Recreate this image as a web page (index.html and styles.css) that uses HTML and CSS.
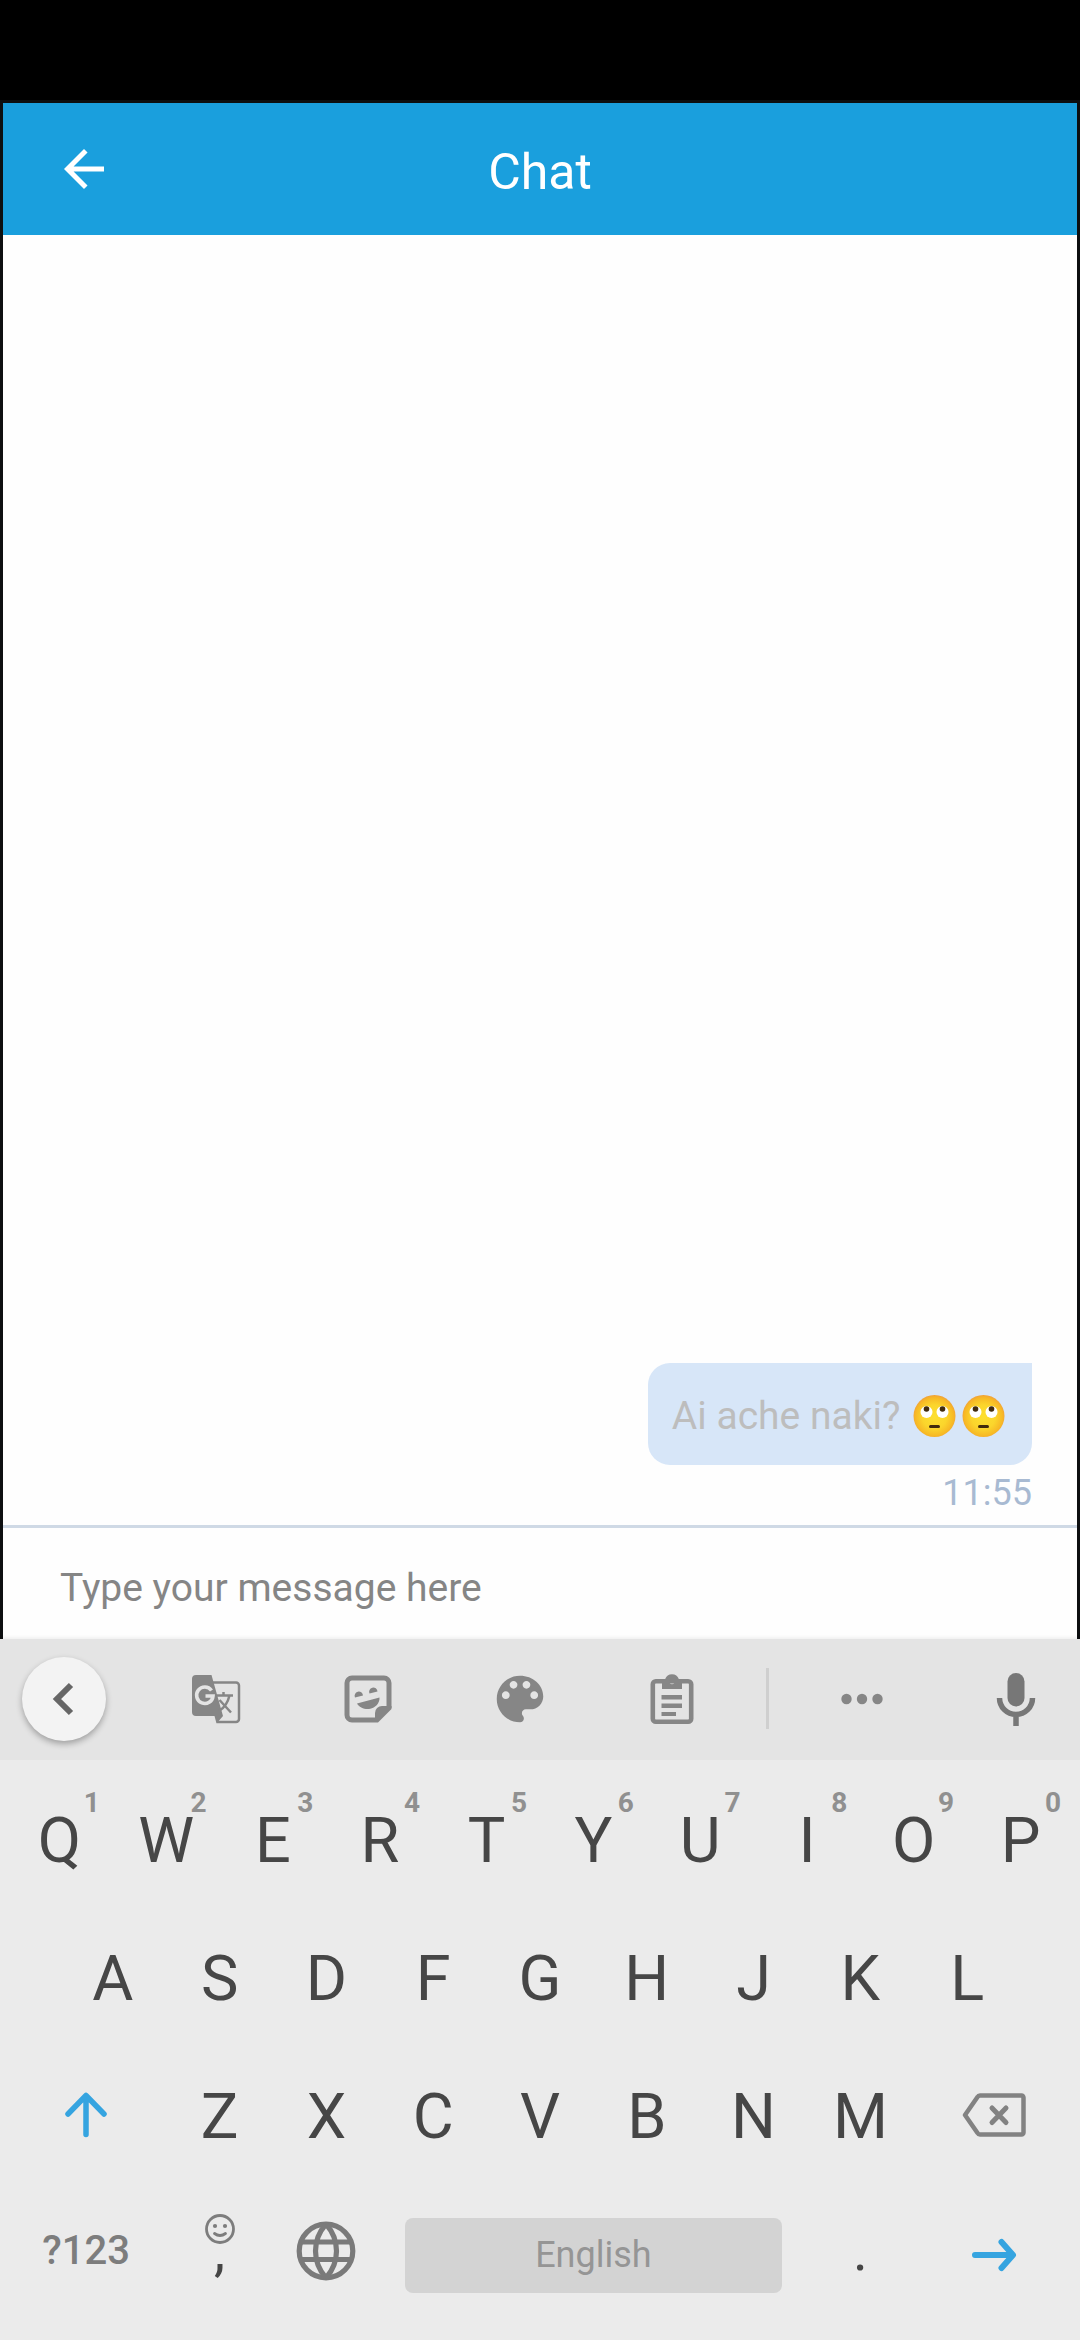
FILE: index.html
```html
<!DOCTYPE html>
<html lang="en">
<head>
<meta charset="utf-8">
<meta name="viewport" content="width=device-width, initial-scale=1">
<title>Chat</title>
<link rel="stylesheet" href="styles.css">
</head>
<body>
<svg class="defs" aria-hidden="true">
  <defs>
    <radialGradient id="skin" cx="50%" cy="52%" r="52%">
      <stop offset="0" stop-color="#fde030"/>
      <stop offset="0.55" stop-color="#fbd52c"/>
      <stop offset="0.88" stop-color="#f7b825"/>
      <stop offset="1" stop-color="#f0a13a"/>
    </radialGradient>
    <symbol id="eyeroll" viewBox="0 0 48 42">
      <circle cx="24" cy="21" r="21" fill="url(#skin)"/>
      <circle cx="16" cy="17" r="6" fill="#fff"/>
      <circle cx="32" cy="17" r="6" fill="#fff"/>
      <circle cx="16" cy="14" r="2.8" fill="#422b0d"/>
      <circle cx="32" cy="14" r="2.8" fill="#422b0d"/>
      <rect x="18.5" y="30" width="11" height="3" rx="1.5" fill="#422b0d"/>
    </symbol>
  </defs>
</svg>

<div class="status-bar"></div>

<main class="app">
  <header class="app-bar">
    <button class="back" type="button" aria-label="Back">
      <svg width="60" height="60" viewBox="0 0 24 24" fill="currentColor"><path d="M20 11H7.83l5.59-5.59L12 4l-8 8 8 8 1.41-1.41L7.83 13H20v-2z"/></svg>
    </button>
    <h1 class="title">Chat</h1>
  </header>

  <section class="messages">
    <article class="message">
      <p class="bubble">Ai ache naki? <svg class="emoji" role="img" aria-label="Eye roll"><use href="#eyeroll"/></svg><svg class="emoji" role="img" aria-label="Eye roll"><use href="#eyeroll"/></svg></p>
      <time class="time">11:55</time>
    </article>
  </section>

  <form class="composer">
    <input class="composer-input" type="text" aria-label="Message" placeholder="Type your message here">
  </form>
</main>

<section class="keyboard" aria-label="Keyboard">
  <div class="toolbar">
    <div class="toolbar-end">
      <button class="tool tool-round" type="button" aria-label="Collapse">
        <svg width="84" height="84" viewBox="0 0 84 84" fill="none" stroke="#666" stroke-width="6"><path d="M49 28L35 42l14 14"/></svg>
      </button>
    </div>
    <div class="tools">
      <button class="tool" type="button" aria-label="Translate">
        <svg width="50" height="50" viewBox="0 0 50 50"><path d="M22 8.500H45a3 3 0 0 1 3 3V45a3 3 0 0 1-3 3H26" fill="none" stroke="#868686" stroke-width="2.500"/><path d="M5 1H20.500L32 42l-6.500 7.500L23.500 42H5a4 4 0 0 1-4-4V5a4 4 0 0 1 4-4z" fill="#868686"/><path d="M20.500 16.500A8.200 8.200 0 1 0 22 22H14.500" fill="none" stroke="#e4e4e4" stroke-width="3.600"/><path d="M25.500 21.500H42M32.500 18v3.500M38.500 21.500C37 28 33 34 28 37M28.500 26L40 38.500" fill="none" stroke="#868686" stroke-width="2.500"/></svg>
      </button>
      <button class="tool" type="button" aria-label="Stickers">
        <svg width="48" height="48" viewBox="0 0 48 48" fill="#868686"><path d="M31 45H8a5 5 0 0 1-5-5V8a5 5 0 0 1 5-5h32a5 5 0 0 1 5 5v25" fill="none" stroke="#868686" stroke-width="5"/><path d="M31 47.500V38a7 7 0 0 1 7-7h9.500v3L34 47.500z"/><path d="M11 22.500a4.200 4.200 0 1 1 8-2zM25.500 18.500a4.200 4.200 0 1 1 8-2zM13 28.500L35.500 22.500C36 28 31 33.500 25 34 20 34.500 15 32 13 28.500z"/></svg>
      </button>
      <button class="tool" type="button" aria-label="Themes">
        <svg width="62" height="62" viewBox="0 0 24 24" fill="#868686"><path d="M12 3c-4.970 0-9 4.030-9 9s4.030 9 9 9c.830 0 1.500-.670 1.500-1.500 0-.390-.150-.740-.390-1.010-.230-.260-.380-.610-.380-.990 0-.830.670-1.500 1.500-1.500H16c2.760 0 5-2.240 5-5 0-4.420-4.030-8-9-8zm-5.500 9c-.830 0-1.500-.670-1.500-1.500S5.670 9 6.500 9 8 9.670 8 10.500 7.330 12 6.500 12zm3-4C8.670 8 8 7.330 8 6.500S8.670 5 9.500 5s1.500.670 1.500 1.500S10.330 8 9.500 8zm5 0c-.830 0-1.500-.670-1.500-1.500S13.670 5 14.500 5s1.500.670 1.500 1.500S15.330 8 14.500 8zm3 4c-.830 0-1.500-.670-1.500-1.500S16.670 9 17.500 9s1.500.670 1.500 1.500-.670 1.500-1.500 1.500z"/></svg>
      </button>
      <button class="tool" type="button" aria-label="Clipboard">
        <svg width="44" height="52" viewBox="0 0 44 52" fill="#868686"><rect x="2.800" y="8.200" width="38.400" height="40.600" rx="3" fill="none" stroke="#868686" stroke-width="4.600"/><path fill-rule="evenodd" d="M12 6h3.200a7.200 7.200 0 0 1 13.600 0H32v10H12zM22 6a2.600 2.600 0 1 0 0 5.200A2.600 2.600 0 0 0 22 6z"/><path d="M11.500 22H32v4.500H11.500zM11.500 30.500H32V35H11.500zM11.500 39H26v4H11.500z"/></svg>
      </button>
      <span class="divider"></span>
      <button class="tool" type="button" aria-label="More">
        <svg width="42" height="12" viewBox="0 0 42 12" fill="#868686"><circle cx="5.500" cy="6" r="5.200"/><circle cx="21" cy="6" r="5.200"/><circle cx="36.500" cy="6" r="5.200"/></svg>
      </button>
    </div>
    <div class="toolbar-end">
      <button class="tool" type="button" aria-label="Voice input">
        <svg width="40" height="54" viewBox="0 0 40 54"><rect x="11.500" y="1" width="17" height="33.500" rx="8.500" fill="#777"/><path d="M3.500 26a16.500 16.500 0 0 0 33 0M20 42v12" fill="none" stroke="#777" stroke-width="5.500"/></svg>
      </button>
    </div>
  </div>

  <div class="keys">
    <div class="row">
      <button class="key" type="button">Q<span class="hint">1</span></button>
      <button class="key" type="button">W<span class="hint">2</span></button>
      <button class="key" type="button">E<span class="hint">3</span></button>
      <button class="key" type="button">R<span class="hint">4</span></button>
      <button class="key" type="button">T<span class="hint">5</span></button>
      <button class="key" type="button">Y<span class="hint">6</span></button>
      <button class="key" type="button">U<span class="hint">7</span></button>
      <button class="key" type="button">I<span class="hint">8</span></button>
      <button class="key" type="button">O<span class="hint">9</span></button>
      <button class="key" type="button">P<span class="hint">0</span></button>
    </div>
    <div class="row row-home">
      <button class="key" type="button">A</button>
      <button class="key" type="button">S</button>
      <button class="key" type="button">D</button>
      <button class="key" type="button">F</button>
      <button class="key" type="button">G</button>
      <button class="key" type="button">H</button>
      <button class="key" type="button">J</button>
      <button class="key" type="button">K</button>
      <button class="key" type="button">L</button>
    </div>
    <div class="row">
      <button class="key key-wide key-icon" type="button" aria-label="Shift">
        <svg width="44" height="46" viewBox="0 0 44 46" fill="none" stroke="#35a4e0" stroke-width="5.500" stroke-linecap="round" stroke-linejoin="round"><path d="M22 42.500V4M4 22L22 3.500 40 22"/></svg>
      </button>
      <button class="key" type="button">Z</button>
      <button class="key" type="button">X</button>
      <button class="key" type="button">C</button>
      <button class="key" type="button">V</button>
      <button class="key" type="button">B</button>
      <button class="key" type="button">N</button>
      <button class="key" type="button">M</button>
      <button class="key key-wide key-icon" type="button" aria-label="Delete">
        <svg width="64" height="46" viewBox="0 0 64 46" fill="none" stroke="#828282" stroke-width="4.500" stroke-linecap="round" stroke-linejoin="round"><path d="M18 3.500H59.500a2 2 0 0 1 2 2V40.500a2 2 0 0 1-2 2H18a3 3 0 0 1-2.500-1.500L3 23 15.500 5a3 3 0 0 1 2.500-1.500z"/><path d="M30 16L44 30.500M44 16L30 30.500" stroke-width="5"/></svg>
      </button>
    </div>
    <div class="row">
      <button class="key key-wide key-raised key-symbols" type="button">?123</button>
      <button class="key key-comma" type="button">
        <svg width="30" height="30" viewBox="0 0 30 30" fill="none" stroke="#7d7d7d" stroke-width="2.800"><circle cx="15" cy="15" r="13.500"/><path d="M9.500 19.500q5.500 4 11 0" stroke-linecap="round"/><circle cx="10" cy="12" r="2.100" fill="#7d7d7d" stroke="none"/><circle cx="20" cy="12" r="2.100" fill="#7d7d7d" stroke="none"/></svg>
        <span class="comma">,</span>
      </button>
      <button class="key key-raised" type="button" aria-label="Change language">
        <svg width="60" height="60" viewBox="0 0 60 60" fill="none" stroke="#7a7a7a" stroke-width="5.200"><circle cx="30" cy="30" r="26.800"/><path d="M5 21H55M5 38.500H55M30 3C16 19 16 41 30 57M30 3C44 19 44 41 30 57"/></svg>
      </button>
      <button class="key key-space" type="button"><span class="space-bar">English</span></button>
      <button class="key key-raised key-period" type="button">.</button>
      <button class="key key-wide" type="button" aria-label="Next">
        <svg width="46" height="34" viewBox="0 0 46 34" fill="none" stroke="#35a4e0" stroke-width="6" stroke-linecap="round" stroke-linejoin="round"><path d="M4 17H41M30.500 4L42 17 30.500 30"/></svg>
      </button>
    </div>
  </div>
</section>
</body>
</html>
```

FILE: styles.css
```css
*,
*::before,
*::after {
  box-sizing: border-box;
}

body {
  margin: 0;
  min-height: 100vh;
  display: flex;
  flex-direction: column;
  background: #fff;
  font-family: Roboto, "Liberation Sans", sans-serif;
}

button,
input {
  margin: 0;
  padding: 0;
  border: 0;
  background: none;
  color: inherit;
  font: inherit;
}

svg {
  display: block;
}

.defs {
  position: absolute;
  width: 0;
  height: 0;
}

.status-bar {
  height: 100px;
  background: #000;
}

.app {
  flex: 1;
  display: flex;
  flex-direction: column;
  border: 3px solid #0d0f10;
  border-bottom: 0;
  background: #fefefe;
}

/* App bar */
.app-bar {
  display: grid;
  grid-template-columns: 111px 1fr 111px;
  align-items: center;
  height: 132px;
  background: #1a9fdd;
  color: #fff;
}

.back {
  justify-self: end;
}

.title {
  margin: 0;
  padding-top: 6px;
  font-size: 50px;
  font-weight: 400;
  line-height: 60px;
  text-align: center;
}

/* Messages */
.messages {
  flex: 1;
  display: flex;
  flex-direction: column;
  justify-content: flex-end;
  padding: 0 45px 10px;
}

.message {
  display: flex;
  flex-direction: column;
  align-items: flex-end;
  gap: 6px;
}

.bubble {
  display: flex;
  align-items: center;
  margin: 0;
  padding: 26px 24px 22px;
  border-radius: 22px 0 22px 22px;
  background: #d7e6f8;
  color: #bdbdbd;
  font-size: 39px;
  line-height: 54px;
  white-space: pre;
}

.emoji {
  width: 49px;
  height: 42px;
}

.time {
  color: #a8bad2;
  font-size: 36px;
  line-height: 44px;
}

.composer {
  display: flex;
  border-top: 3px solid #cfd9e5;
}

.composer-input {
  flex: 1;
  min-width: 0;
  height: 111px;
  padding: 8px 57px 0;
  color: #333;
  font-size: 39px;
  outline: 0;
}

.composer-input::placeholder {
  color: #858585;
  opacity: 1;
}

/* Keyboard */
.keyboard {
  background: #ebebeb;
  box-shadow: 0 -1px 4px rgba(0, 0, 0, 0.08);
}

.toolbar {
  display: flex;
  height: 121px;
  padding-bottom: 2px;
  background: #e4e4e4;
}

.toolbar-end {
  display: grid;
  place-items: center;
  width: 128px;
}

.tools {
  flex: 1;
  display: grid;
  grid-template-columns: repeat(4, 152fr) 39fr 149fr;
  place-items: center;
  margin: 0 16px 0 12px;
}

.tool-round {
  border-radius: 50%;
  background: #f3f3f3;
  box-shadow: 0 3px 6px rgba(0, 0, 0, 0.3);
}

.divider {
  width: 3px;
  height: 61px;
  background: #cfcfcf;
}

.keys {
  padding: 12px 6px 16px;
}

.row {
  display: flex;
  height: 138px;
}

.row-home {
  padding: 0 5%;
}

.key {
  position: relative;
  flex: 2 1 0;
  display: flex;
  align-items: center;
  justify-content: center;
  color: #464646;
  font-size: 63px;
  line-height: 74px;
}

.key-wide {
  flex-grow: 3;
}

.key-space {
  flex-grow: 8;
}

.key-icon {
  padding-bottom: 4px;
}

.key-raised {
  padding-bottom: 8px;
}

.hint {
  position: absolute;
  top: 14px;
  right: 13px;
  color: #909090;
  font-size: 28px;
  font-weight: 700;
  line-height: 34px;
}

.key-symbols {
  color: #7d7d7d;
  font-size: 40px;
  font-weight: 500;
}

.key-comma {
  flex-direction: column;
  justify-content: flex-start;
  padding-top: 28px;
}

.comma {
  font-size: 56px;
  line-height: 14px;
}

.key-period {
  font-size: 56px;
}

.space-bar {
  flex: 1;
  margin: 0 25px;
  border-radius: 8px;
  background: #d3d3d3;
  color: #959595;
  font-size: 36px;
  line-height: 75px;
}
```
